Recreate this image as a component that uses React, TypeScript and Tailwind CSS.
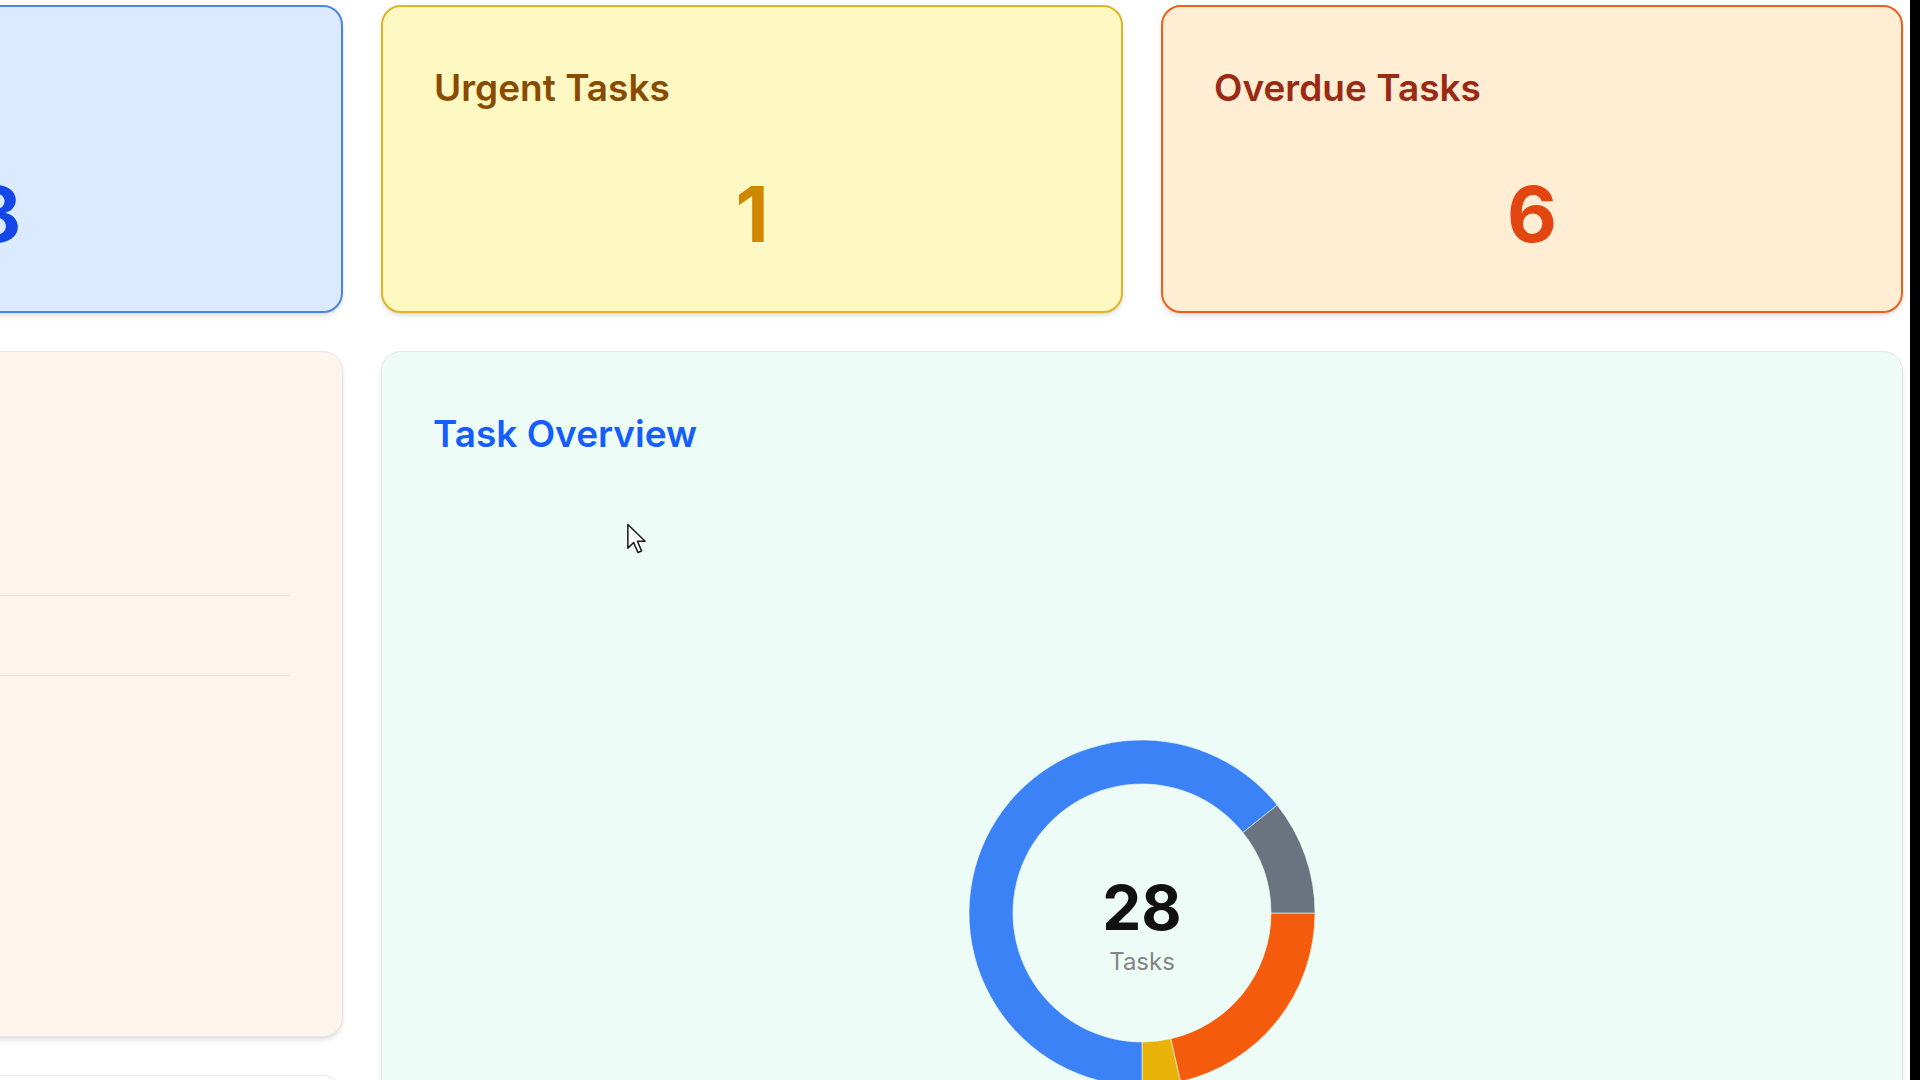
import React from "react";

type Segment = { label: string; value: number; color: string };

// order matters: chart starts at 3 o'clock and runs clockwise
const segments: Segment[] = [
  { label: "Overdue", value: 6, color: "#f45b0c" },
  { label: "Urgent", value: 1, color: "#e9b208" },
  { label: "In Progress", value: 18, color: "#3b82f6" },
  { label: "Completed", value: 3, color: "#6b7280" },
];

function arcPath(cx: number, cy: number, r0: number, r1: number, a0: number, a1: number) {
  const rad = (a: number) => ((a - 90) * Math.PI) / 180;
  const pt = (r: number, a: number) => [cx + r * Math.cos(rad(a)), cy + r * Math.sin(rad(a))];
  const large = a1 - a0 > 180 ? 1 : 0;
  const [x0, y0] = pt(r1, a0);
  const [x1, y1] = pt(r1, a1);
  const [x2, y2] = pt(r0, a1);
  const [x3, y3] = pt(r0, a0);
  return `M${x0} ${y0} A${r1} ${r1} 0 ${large} 1 ${x1} ${y1} L${x2} ${y2} A${r0} ${r0} 0 ${large} 0 ${x3} ${y3} Z`;
}

function Donut() {
  const total = segments.reduce((s, x) => s + x.value, 0);
  let angle = 90;
  return (
    <div className="relative h-[346px] w-[346px]">
      <svg width="346" height="346" viewBox="0 0 346 346">
        {segments.map((seg) => {
          const start = angle;
          const end = angle + (seg.value / total) * 360;
          angle = end;
          return (
            <path
              key={seg.label}
              d={arcPath(173, 173, 129, 173, start, end)}
              fill={seg.color}
              stroke="#edfdf7"
              strokeWidth="0.6"
            />
          );
        })}
      </svg>
      <div className="absolute inset-0 flex flex-col items-center pt-[137px]">
        <span className="text-[62px] font-bold leading-none text-[#111111]">{total}</span>
        <span className="mt-[11px] text-[24px] leading-none text-[#858585]">Tasks</span>
      </div>
    </div>
  );
}

function StatCard({
  title,
  value,
  box,
  titleColor,
  valueColor,
}: {
  title: string;
  value: number;
  box: string;
  titleColor: string;
  valueColor: string;
}) {
  return (
    <div className={`flex flex-col items-center rounded-[20px] border-2 px-[51px] pt-[61px] shadow-md ${box}`}>
      <h3 className={`self-start text-[37px] font-semibold leading-10 ${titleColor}`}>{title}</h3>
      <p className={`mt-[68px] text-[77px] font-bold leading-none ${valueColor}`}>{value}</p>
    </div>
  );
}

export default function App() {
  return (
    <div className="flex h-screen w-full overflow-hidden bg-white font-['Inter','Liberation_Sans',sans-serif]">
      <div className="relative flex-1 overflow-hidden">
        <div className="-ml-[399px] grid w-[2302px] grid-cols-[742px_742px_742px] grid-rows-[308px_686px_300px] gap-x-[38px] gap-y-[38px] pt-[5px]">
          {/* Stat cards */}
          <StatCard
            title="Total Tasks"
            value={28}
            box="border-[#4a86e6] bg-blue-100"
            titleColor="text-blue-800"
            valueColor="text-blue-700"
          />
          <StatCard
            title="Urgent Tasks"
            value={1}
            box="border-[#e2b323] bg-yellow-100"
            titleColor="text-yellow-800"
            valueColor="text-yellow-600"
          />
          <StatCard
            title="Overdue Tasks"
            value={6}
            box="border-[#e8621c] bg-orange-100"
            titleColor="text-[#9a2a14]"
            valueColor="text-[#e2450f]"
          />

          {/* Recent list panel */}
          <div className="rounded-[20px] border border-gray-200 bg-[#fdf4ec] px-[51px] pt-[164px] shadow-md">
            <div className="h-[80px] border-b border-[#ece3de]" />
            <div className="h-[80px] border-b border-[#ece3de]" />
            <div className="h-[80px]" />
          </div>

          {/* Task Overview */}
          <div className="relative col-span-2 row-span-2 flex flex-col rounded-[20px] border border-gray-200 bg-[#eefcf7] px-[51px] pt-[62px] shadow-md">
            <h2 className="text-[37px] font-semibold leading-10 text-blue-600">Task Overview</h2>
            <div className="mt-[286px] flex justify-center">
              <Donut />
            </div>
            <svg
              className="absolute left-[244px] top-[171px]"
              width="22"
              height="32"
              viewBox="0 0 14 21"
            >
              <path
                d="M1 1 L1 16.5 L4.8 12.8 L7.6 19.4 L10 18.4 L7.3 12 L12.3 12 Z"
                fill="#ffffff"
                stroke="#1a1a1a"
                strokeWidth="1"
                strokeLinejoin="round"
              />
            </svg>
          </div>

          {/* Next panel, mostly below the fold */}
          <div className="rounded-[20px] border border-gray-200 bg-white shadow-md" />
        </div>
      </div>
      <div className="w-[10px] bg-black" />
    </div>
  );
}
